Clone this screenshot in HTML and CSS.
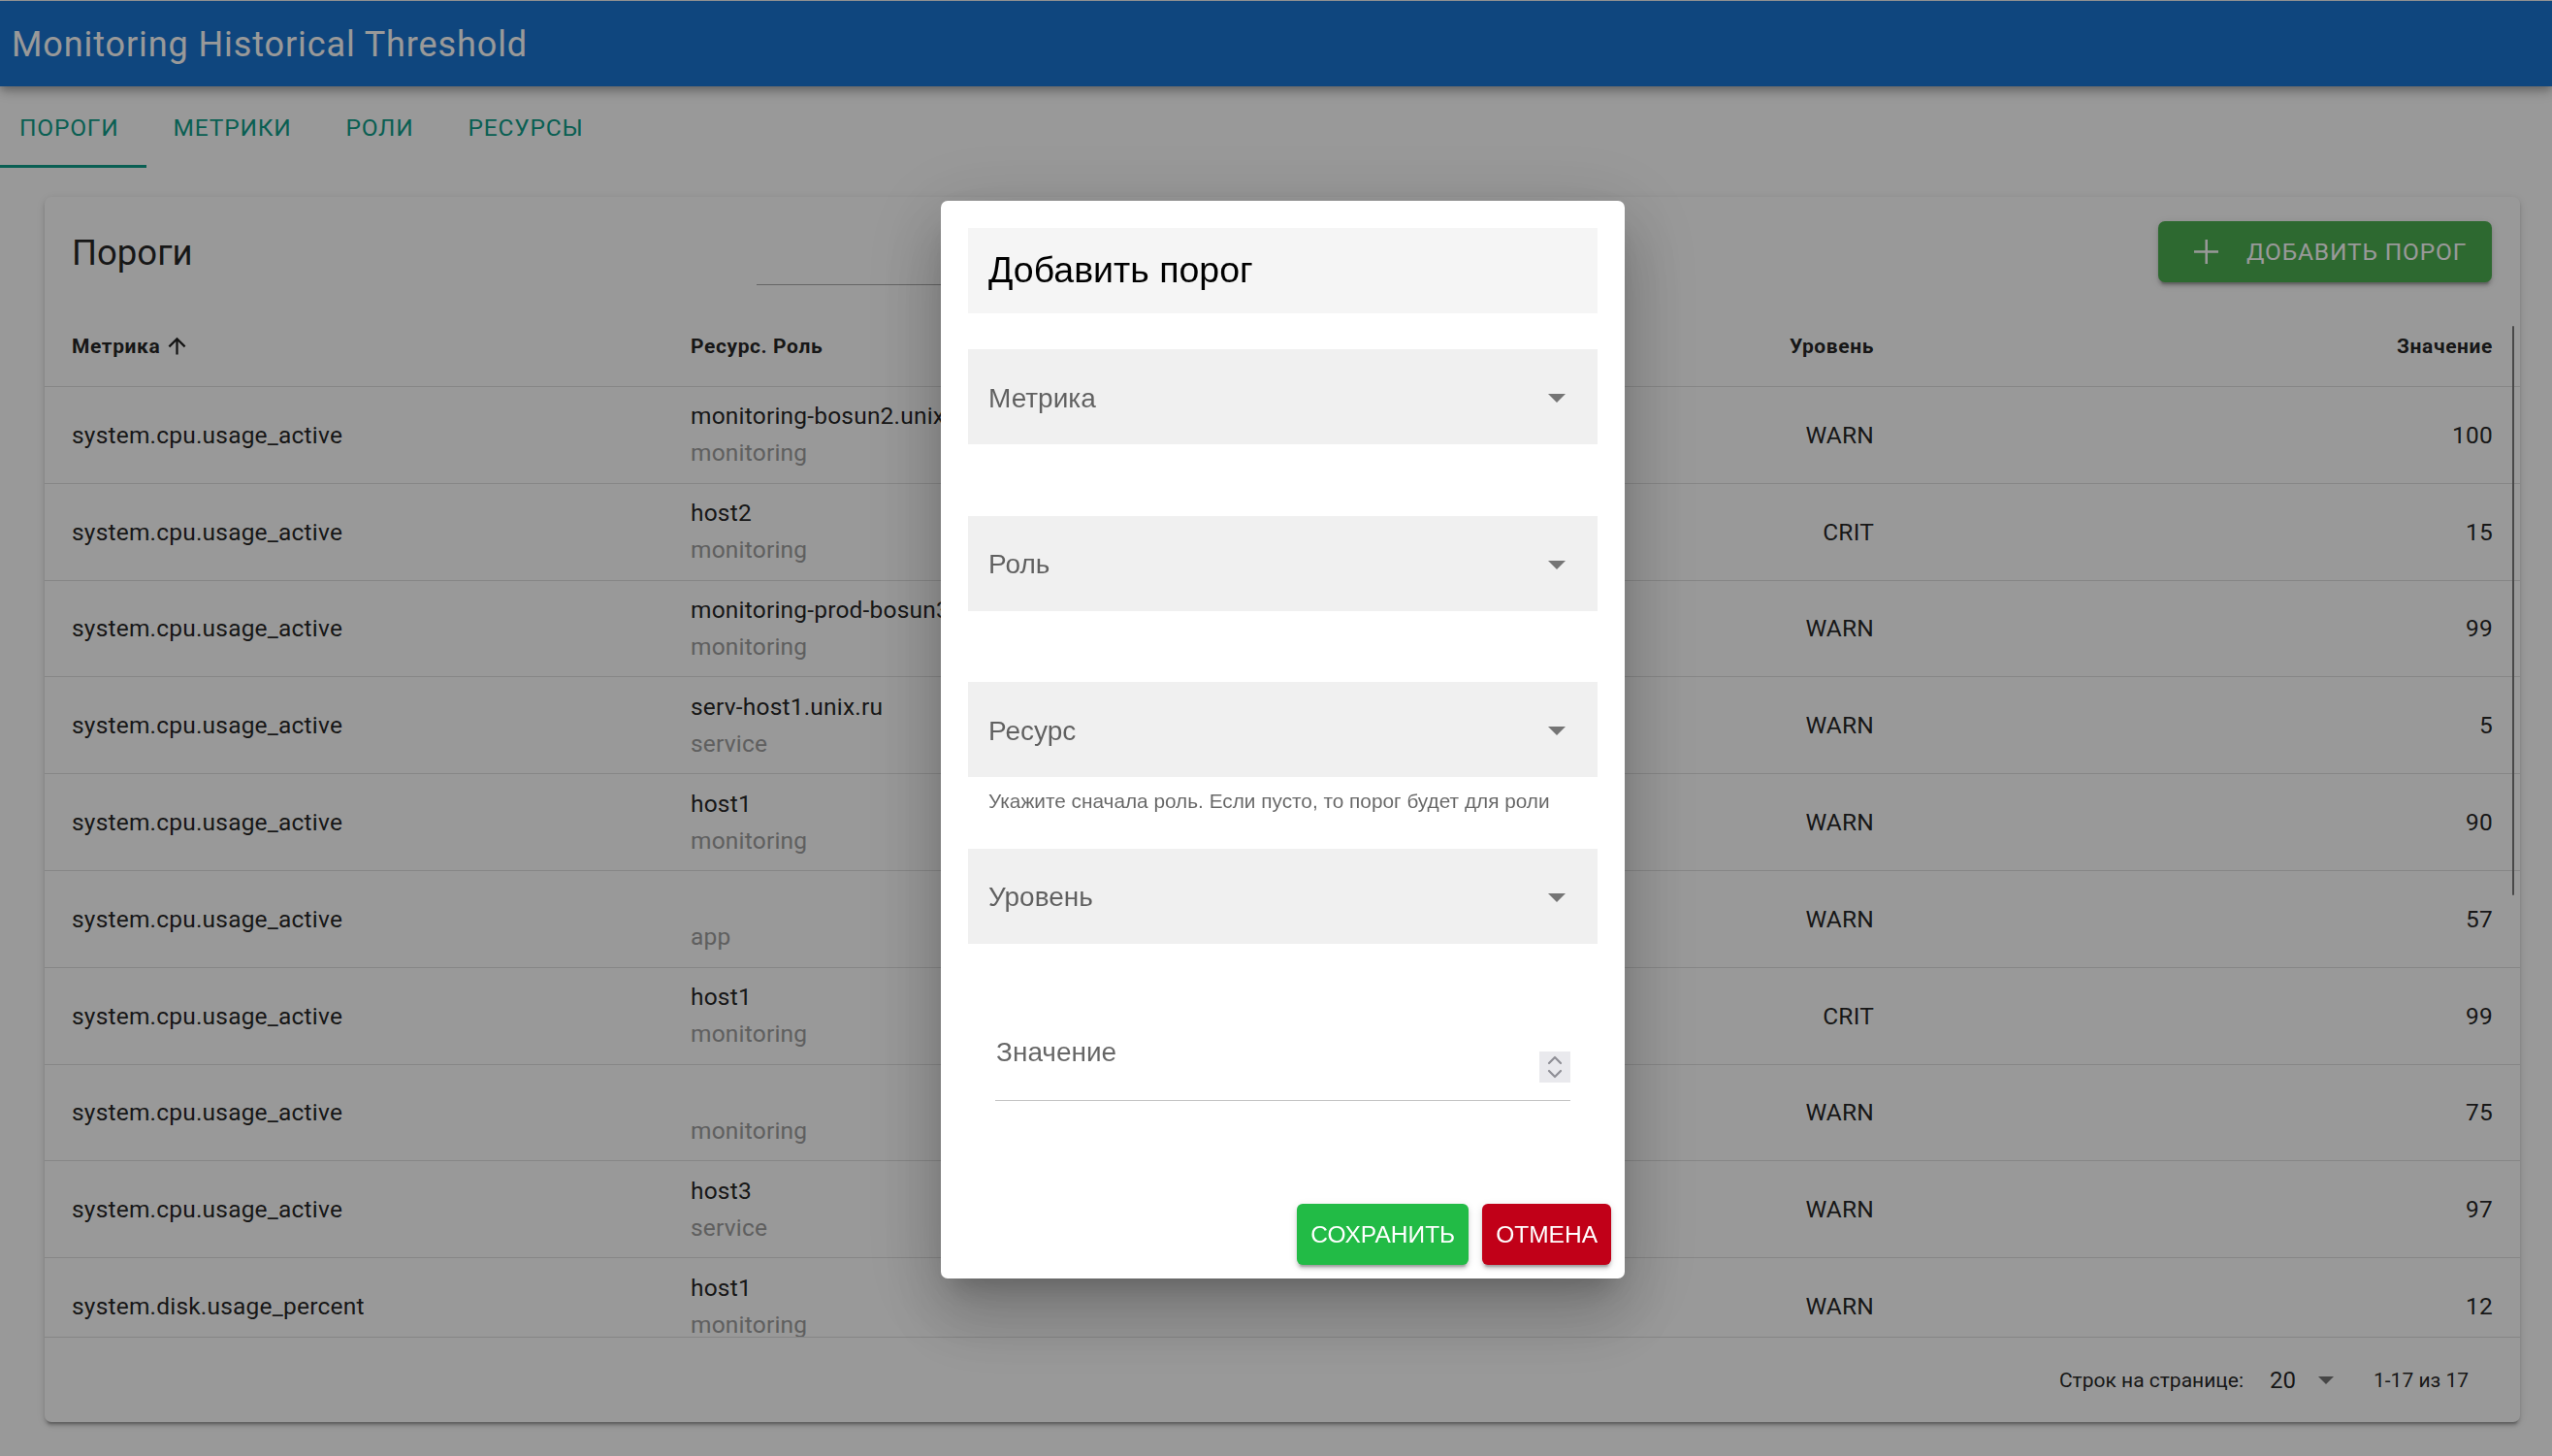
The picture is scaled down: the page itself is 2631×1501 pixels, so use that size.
FILE: index.html
```html
<!DOCTYPE html>
<html lang="ru">
<head>
<meta charset="utf-8">
<title>Monitoring Historical Threshold</title>
<link rel="stylesheet" href="styles.css">
</head>
<body>
<div class="app">
  <header class="appbar">
    <div class="appbar-title">Monitoring Historical Threshold</div>
  </header>
  <nav class="tabs">
    <a class="tab active">ПОРОГИ</a>
    <a class="tab">МЕТРИКИ</a>
    <a class="tab">РОЛИ</a>
    <a class="tab">РЕСУРСЫ</a>
  </nav>
  <main class="content">
    <section class="card">
      <div class="card-title">
        <h2 class="card-heading">Пороги</h2>
        <div class="search"></div>
        <button class="btn-add">
          <svg class="plus" viewBox="0 0 24 24" width="25" height="25"><path d="M11 0h2.4v10.8H24v2.4H13.4V24H11V13.2H0v-2.4h11z" fill="#fff"/></svg>
          <span>ДОБАВИТЬ ПОРОГ</span>
        </button>
      </div>
      <div class="table-wrap">
        <div class="row head">
          <div class="cell"><span class="sort">Метрика <svg viewBox="0 0 24 24" width="27" height="27"><path d="M13,20H11V8L5.5,13.5L4.08,12.08L12,4.16L19.92,12.08L18.5,13.5L13,8V20Z" fill="rgba(0,0,0,.87)"/></svg></span></div>
          <div class="cell">Ресурс. Роль</div>
          <div class="cell num">Уровень</div>
          <div class="cell num">Значение</div>
        </div>
        <div class="row">
          <div class="cell">system.cpu.usage_active</div>
          <div class="cell"><div class="l1">monitoring-bosun2.unix.ru</div><div class="l2">monitoring</div></div>
          <div class="cell num">WARN</div>
          <div class="cell num">100</div>
        </div>
        <div class="row">
          <div class="cell">system.cpu.usage_active</div>
          <div class="cell"><div class="l1">host2</div><div class="l2">monitoring</div></div>
          <div class="cell num">CRIT</div>
          <div class="cell num">15</div>
        </div>
        <div class="row">
          <div class="cell">system.cpu.usage_active</div>
          <div class="cell"><div class="l1">monitoring-prod-bosun3.unix.ru</div><div class="l2">monitoring</div></div>
          <div class="cell num">WARN</div>
          <div class="cell num">99</div>
        </div>
        <div class="row">
          <div class="cell">system.cpu.usage_active</div>
          <div class="cell"><div class="l1">serv-host1.unix.ru</div><div class="l2">service</div></div>
          <div class="cell num">WARN</div>
          <div class="cell num">5</div>
        </div>
        <div class="row">
          <div class="cell">system.cpu.usage_active</div>
          <div class="cell"><div class="l1">host1</div><div class="l2">monitoring</div></div>
          <div class="cell num">WARN</div>
          <div class="cell num">90</div>
        </div>
        <div class="row">
          <div class="cell">system.cpu.usage_active</div>
          <div class="cell"><div class="l1"></div><div class="l2">app</div></div>
          <div class="cell num">WARN</div>
          <div class="cell num">57</div>
        </div>
        <div class="row">
          <div class="cell">system.cpu.usage_active</div>
          <div class="cell"><div class="l1">host1</div><div class="l2">monitoring</div></div>
          <div class="cell num">CRIT</div>
          <div class="cell num">99</div>
        </div>
        <div class="row">
          <div class="cell">system.cpu.usage_active</div>
          <div class="cell"><div class="l1"></div><div class="l2">monitoring</div></div>
          <div class="cell num">WARN</div>
          <div class="cell num">75</div>
        </div>
        <div class="row">
          <div class="cell">system.cpu.usage_active</div>
          <div class="cell"><div class="l1">host3</div><div class="l2">service</div></div>
          <div class="cell num">WARN</div>
          <div class="cell num">97</div>
        </div>
        <div class="row">
          <div class="cell">system.disk.usage_percent</div>
          <div class="cell"><div class="l1">host1</div><div class="l2">monitoring</div></div>
          <div class="cell num">WARN</div>
          <div class="cell num">12</div>
        </div>
        <div class="scroll-thumb"></div>
      </div>
      <div class="table-footer">
        <span class="rpp-label">Строк на странице:</span>
        <span class="rpp-value">20</span>
        <svg class="rpp-arrow" viewBox="0 0 16 8" width="16" height="8"><path d="M0 0H16L8 8Z" fill="rgba(0,0,0,.54)"/></svg>
        <span class="range">1-17 из 17</span>
      </div>
    </section>
  </main>
</div>

<div class="overlay"></div>

<div class="dialog">
  <div class="dlg-body">
    <div class="dlg-title">Добавить порог</div>
    <div class="fields">
      <div class="field">
        <div class="select"><span>Метрика</span><svg viewBox="0 0 18 9" width="18" height="9"><path d="M0 0H18L9 9Z" fill="#757575"/></svg></div>
      </div>
      <div class="field">
        <div class="select"><span>Роль</span><svg viewBox="0 0 18 9" width="18" height="9"><path d="M0 0H18L9 9Z" fill="#757575"/></svg></div>
      </div>
      <div class="field">
        <div class="select"><span>Ресурс</span><svg viewBox="0 0 18 9" width="18" height="9"><path d="M0 0H18L9 9Z" fill="#757575"/></svg></div>
        <div class="hint">Укажите сначала роль. Если пусто, то порог будет для роли</div>
      </div>
      <div class="field">
        <div class="select"><span>Уровень</span><svg viewBox="0 0 18 9" width="18" height="9"><path d="M0 0H18L9 9Z" fill="#757575"/></svg></div>
      </div>
    </div>
    <div class="number">
      <div class="number-row">
        <span class="number-label">Значение</span>
        <span class="spinner"><svg viewBox="0 0 32 32" width="32" height="32"><path d="M10 12L16 6L22 12M10 20L16 26L22 20" fill="none" stroke="#8f8f96" stroke-width="2.2" stroke-linecap="round" stroke-linejoin="round"/></svg></span>
      </div>
    </div>
  </div>
  <div class="dlg-actions">
    <button class="btn btn-save">СОХРАНИТЬ</button>
    <button class="btn btn-cancel">ОТМЕНА</button>
  </div>
</div>
</body>
</html>
```
FILE: styles.css
```css
html, body {
  margin: 0;
  padding: 0;
}
body {
  width: 2631px;
  height: 1501px;
  overflow: hidden;
  background: #ffffff;
  font-family: Roboto, "Liberation Sans", sans-serif;
  color: rgba(0, 0, 0, .87);
}
.app {
  padding-top: 1px;
}
.appbar {
  position: relative;
  z-index: 2;
  height: 88px;
  box-sizing: border-box;
  padding: 2px 0 0 12px;
  background: #1976d2;
  display: flex;
  align-items: center;
  box-shadow: 0 3.5px 7px -2px rgba(0,0,0,.2), 0 7px 9px 0 rgba(0,0,0,.14), 0 2px 17px 0 rgba(0,0,0,.12);
}
.appbar-title {
  color: #ffffff;
  font-size: 36px;
  letter-spacing: .025em;
  line-height: 1;
}
.tabs {
  position: relative;
  z-index: 1;
  height: 84px;
  display: flex;
  background: #ffffff;
}
.tab {
  position: relative;
  display: flex;
  align-items: center;
  padding: 0 28px;
  font-size: 24.5px;
  color: #0f9f8a;
  letter-spacing: .8px;
}
.tab:first-child {
  padding-left: 20px;
}
.tab.active::after {
  content: "";
  position: absolute;
  left: 0;
  right: 0;
  bottom: 0;
  height: 3.5px;
  background: #0f9f8a;
}
.content {
  padding: 30px 0 0 46px;
}
.card {
  width: 2552px;
  background: #ffffff;
  border-radius: 7px;
  box-shadow: 0 5px 2px -3.5px rgba(0,0,0,.2), 0 3.5px 3.5px 0 rgba(0,0,0,.14), 0 2px 9px 0 rgba(0,0,0,.12);
}
.card-title {
  display: flex;
  align-items: center;
  padding: 28px 29px 28px 28px;
  height: 56px;
}
.card-heading {
  flex: 0 0 706px;
  margin: 2px 0 -2px;
  font-size: 36.5px;
  font-weight: 400;
  line-height: 56px;
  color: rgba(0,0,0,.87);
}
.search {
  align-self: flex-start;
  margin-bottom: -7px;
  width: 820px;
  height: 63px;
  box-sizing: border-box;
  border-bottom: 1px solid #a8a8a8;
}
.btn-add {
  margin: -3.5px 0 -3.5px auto;
  height: 63px;
  width: 344px;
  box-sizing: border-box;
  padding: 0 0 0 37px;
  display: flex;
  align-items: center;
  gap: 29px;
  border: 0;
  border-radius: 7px;
  background: #4caf50;
  color: #ffffff;
  font-family: Roboto, sans-serif;
  font-size: 24.5px;
  letter-spacing: .85px;
  box-shadow: 0 5px 2px -3.5px rgba(0,0,0,.2), 0 3.5px 3.5px 0 rgba(0,0,0,.14), 0 2px 9px 0 rgba(0,0,0,.12);
}
.plus {
  flex: 0 0 auto;
}
.table-wrap {
  position: relative;
  height: 1063px;
  overflow: hidden;
}
.row {
  display: grid;
  grid-template-columns: repeat(4, 1fr);
  align-items: center;
  height: 99.8px;
  box-sizing: border-box;
  border-bottom: 1px solid #e0e0e0;
  font-size: 24.5px;
  letter-spacing: .2px;
}
.row.head {
  height: 84px;
  font-size: 21px;
  font-weight: 700;
  letter-spacing: .6px;
  color: rgba(0,0,0,.87);
}
.cell {
  padding: 0 28px;
  white-space: nowrap;
  overflow: hidden;
}
.cell.num {
  text-align: right;
}
.sort {
  display: inline-flex;
  align-items: center;
  gap: 4px;
}
.l1, .l2 {
  height: 38px;
  line-height: 38px;
}
.l2 {
  color: #9e9e9e;
}
.scroll-thumb {
  position: absolute;
  right: 6px;
  top: 21px;
  width: 2.5px;
  height: 587px;
  background: #7a7a7a;
  border-radius: 2px;
}
.table-footer {
  height: 87px;
  border-top: 1px solid #e0e0e0;
  display: flex;
  align-items: center;
  justify-content: flex-end;
  padding-right: 53px;
  font-size: 21px;
  color: rgba(0,0,0,.87);
}
.rpp-value {
  margin-left: 27px;
  font-size: 24px;
}
.rpp-arrow {
  margin-left: 23px;
}
.range {
  margin-left: 41px;
}

.overlay {
  position: fixed;
  left: 0;
  top: 0;
  right: 0;
  bottom: 0;
  background: rgba(0, 0, 0, .4);
  z-index: 10;
}
.dialog {
  position: fixed;
  left: 970px;
  top: 207px;
  width: 705px;
  z-index: 11;
  background: #ffffff;
  border-radius: 7px;
  font-family: "Liberation Sans", Arial, sans-serif;
  box-shadow: 0 19px 26px -12px rgba(0,0,0,.2), 0 42px 66px 5px rgba(0,0,0,.14), 0 16px 80px 14px rgba(0,0,0,.12);
}
.dlg-body {
  padding: 28px 28px 0;
}
.dlg-title {
  height: 87.5px;
  background: #f5f5f5;
  display: flex;
  align-items: center;
  padding-left: 21px;
  font-size: 37.5px;
  color: #000000;
}
.fields {
  margin-top: 37.5px;
}
.field {
  height: 171.5px;
}
.select {
  height: 98px;
  box-sizing: border-box;
  background: #f0f0f0;
  display: flex;
  align-items: center;
  justify-content: space-between;
  padding: 3px 33px 0 21px;
  font-size: 28px;
  color: rgba(0,0,0,.6);
}
.hint {
  margin-top: 13px;
  padding-left: 21px;
  font-size: 20.8px;
  color: rgba(0,0,0,.6);
}
.number {
  margin: 0 28px;
  padding-top: 23px;
}
.number-row {
  display: flex;
  justify-content: space-between;
  align-items: flex-start;
  height: 66px;
  box-sizing: border-box;
  border-bottom: 1px solid #c4c4c4;
}
.number-label {
  padding-left: 1px;
  font-size: 28px;
  color: rgba(0,0,0,.6);
}
.spinner {
  margin-top: 15px;
  width: 32px;
  height: 32px;
  background: #e9e9ed;
  display: block;
}
.spinner svg {
  display: block;
}
.dlg-actions {
  margin-top: 106px;
  display: flex;
  justify-content: flex-end;
  gap: 14px;
  padding: 0 14px 14px;
}
.btn {
  height: 63px;
  padding: 0 14px;
  border: 0;
  border-radius: 6px;
  color: #ffffff;
  font-family: "Liberation Sans", Arial, sans-serif;
  font-size: 24.5px;
  box-shadow: 0 5px 2px -3.5px rgba(0,0,0,.2), 0 3.5px 3.5px 0 rgba(0,0,0,.14), 0 2px 9px 0 rgba(0,0,0,.12);
}
.btn-save {
  background: #22bb46;
}
.btn-cancel {
  background: #c10018;
}
```
